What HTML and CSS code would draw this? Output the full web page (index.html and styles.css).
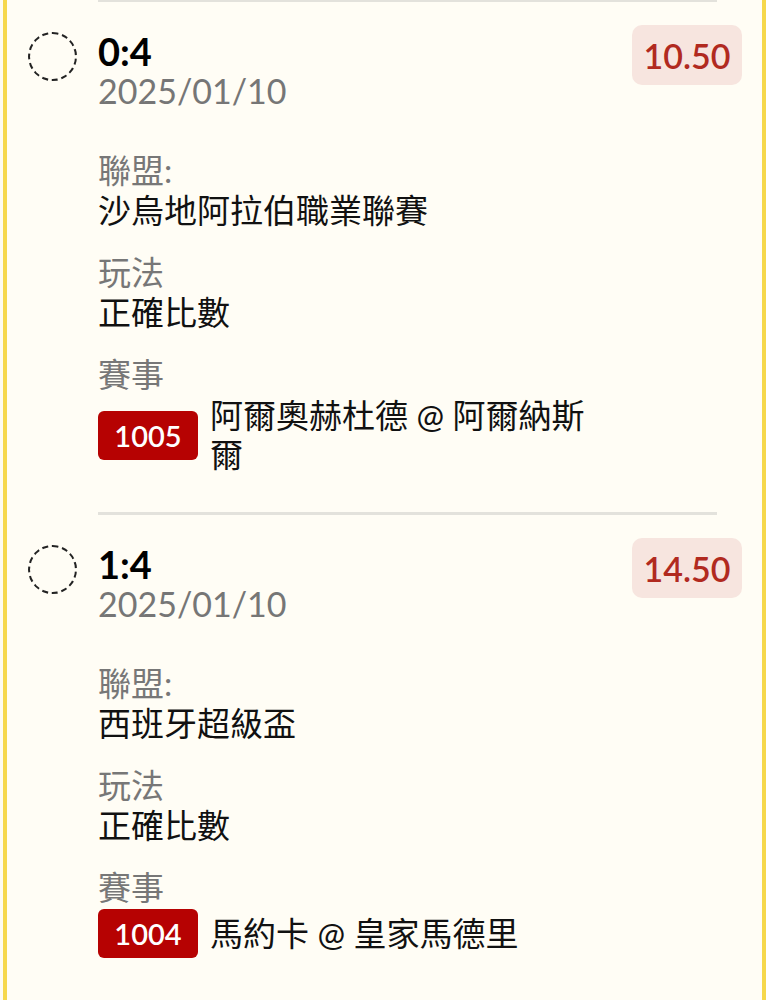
FILE: index.html
```html
<!DOCTYPE html>
<html lang="zh-Hant">

<head>
    <meta charset="UTF-8">
    <title>投注紀錄</title>
    <link rel="stylesheet" href="styles.css">
</head>

<body>
    <div class="bet-list">

        <!-- Bet 1 -->
        <div class="bet-item">
            <div class="bet-head">
                <span class="check"></span>
                <div class="bet-title">
                    <div class="score">0:4</div>
                    <div class="date">2025/01/10</div>
                </div>
                <div class="odds">10.50</div>
            </div>
            <div class="bet-info">
                <div class="info-group">
                    <div class="label">聯盟:</div>
                    <div class="value">沙烏地阿拉伯職業聯賽</div>
                </div>
                <div class="info-group">
                    <div class="label">玩法</div>
                    <div class="value">正確比數</div>
                </div>
                <div class="info-group">
                    <div class="label">賽事</div>
                    <div class="match">
                        <span class="match-no">1005</span>
                        <span class="match-name">阿爾奧赫杜德 @ 阿爾納斯爾</span>
                    </div>
                </div>
            </div>
        </div>

        <!-- Bet 2 -->
        <div class="bet-item">
            <div class="bet-head">
                <span class="check"></span>
                <div class="bet-title">
                    <div class="score">1:4</div>
                    <div class="date">2025/01/10</div>
                </div>
                <div class="odds">14.50</div>
            </div>
            <div class="bet-info">
                <div class="info-group">
                    <div class="label">聯盟:</div>
                    <div class="value">西班牙超級盃</div>
                </div>
                <div class="info-group">
                    <div class="label">玩法</div>
                    <div class="value">正確比數</div>
                </div>
                <div class="info-group">
                    <div class="label">賽事</div>
                    <div class="match">
                        <span class="match-no">1004</span>
                        <span class="match-name">馬約卡 @ 皇家馬德里</span>
                    </div>
                </div>
            </div>
        </div>

    </div>
</body>

</html>
```

FILE: styles.css
```css
/* Reset */
* {
    box-sizing: border-box;
    margin: 0;
    padding: 0;
}

body {
    font-family: Lato, "Noto Sans CJK TC", sans-serif;
    color: #111;
    background: #fdfbf1;
    overflow: hidden;
}

/* List wrapper with yellow side rails */
.bet-list {
    margin-left: 3px;
    margin-top: -1px;
    min-height: 1010px;
    background: #fffdf5;
    border-left: 4px solid #f6d84c;
    border-right: 4px solid #f6d84c;
}

/* One bet */
.bet-item {
    padding: 23px 20px 38px 21px;
    position: relative;
}

.bet-item::before {
    content: "";
    position: absolute;
    top: 0;
    left: 91px;
    right: 45px;
    height: 3px;
    background: #e3e2dc;
}

.bet-head {
    display: flex;
    align-items: flex-start;
}

.check {
    width: 49px;
    height: 49px;
    margin-top: 10px;
    border: 2px dashed #222;
    border-radius: 50%;
    flex-shrink: 0;
}

.bet-title {
    flex: 1;
    margin-left: 21px;
    margin-top: 8px;
}

.score {
    font-size: 38px;
    font-weight: bold;
    line-height: 42px;
    color: #000;
}

.date {
    font-size: 34px;
    line-height: 38px;
    color: #767676;
}

.odds {
    width: 110px;
    height: 60px;
    margin-top: 3px;
    border-radius: 10px;
    background: #f7e5df;
    color: #b12a1f;
    font-size: 34px;
    font-weight: 600;
    display: flex;
    align-items: center;
    justify-content: center;
}

/* Detail rows */
.bet-info {
    padding-left: 70px;
    padding-right: 150px;
    margin-top: 40px;
    display: flex;
    flex-direction: column;
    gap: 22px;
}

.label {
    font-size: 33px;
    line-height: 40px;
    color: #777;
}

.value {
    font-size: 33px;
    line-height: 40px;
}

.match {
    display: flex;
    align-items: center;
    gap: 12px;
    margin-top: 2px;
}

.match-no {
    flex-shrink: 0;
    width: 100px;
    height: 49px;
    border-radius: 6px;
    background: #b60202;
    color: #fff;
    font-size: 29px;
    font-weight: 600;
    display: flex;
    align-items: center;
    justify-content: center;
}

.match-name {
    font-size: 33px;
    line-height: 39px;
}
```
